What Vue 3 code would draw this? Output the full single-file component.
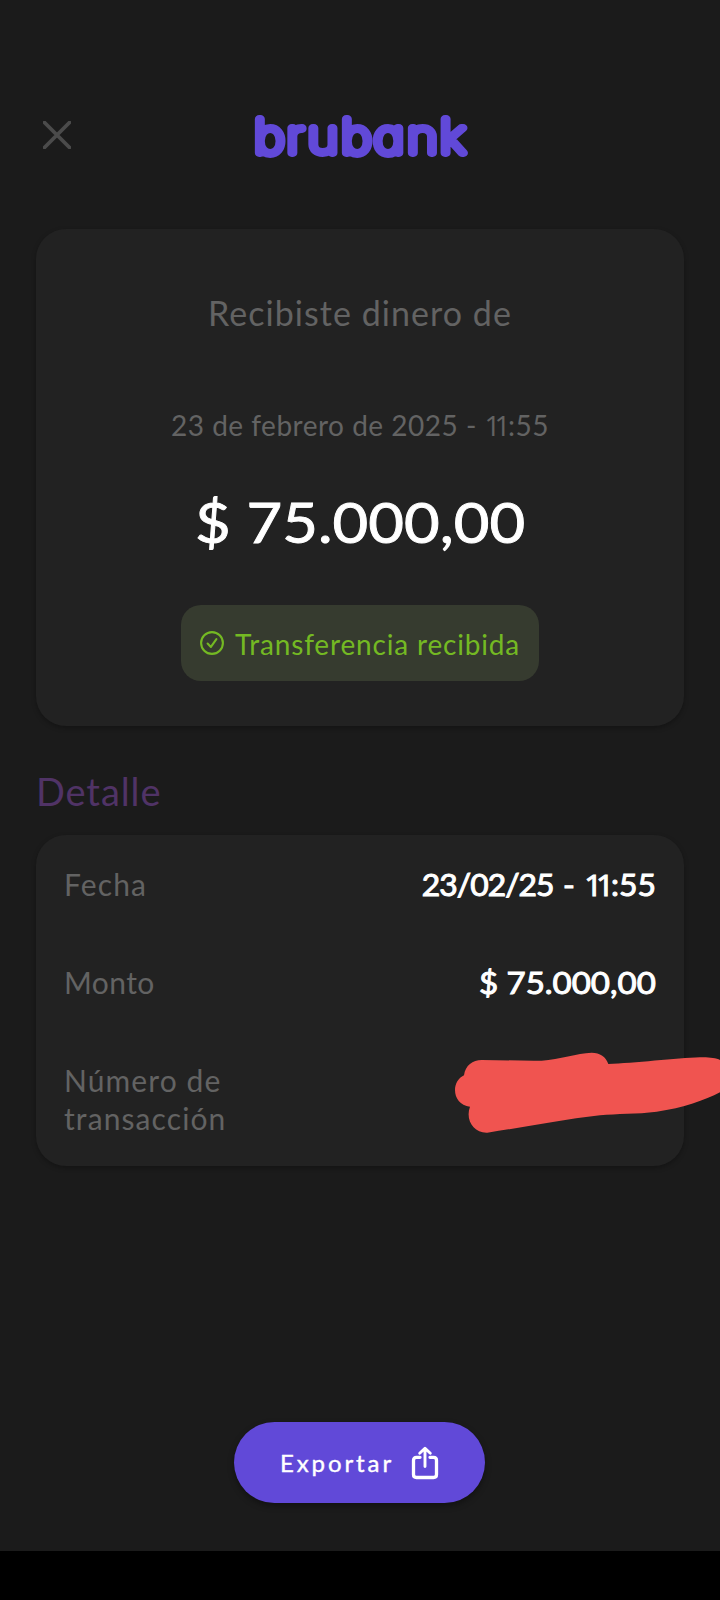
<script setup>
const rows = [
  { label: 'Fecha', kind: 'date' },
  { label: 'Monto', kind: 'money' },
  { label: 'Número de transacción', kind: 'long' },
]
</script>

<template>
  <div class="screen">
    <header class="top">
      <svg class="close" viewBox="0 0 28 28" width="28" height="28">
        <path d="M1.5 1.5L26.5 26.5M26.5 1.5L1.5 26.5" />
      </svg>
      <svg class="logo" viewBox="0 0 240 80" width="240" height="80">
        <text transform="scale(1.13 1)" x="2.9 31.6 50.2 79.8 108.6 138.2 167.2" y="55">brubank</text>
      </svg>
    </header>

    <main class="body">
      <section class="card summary">
        <p class="title">Recibiste dinero de</p>
        <p class="when">23 de febrero de 2025 - <span class="one-a">1</span><span class="one-b">1</span>:55</p>
        <p class="amount">$ 75.000,00</p>
        <div class="badge">
          <svg class="check" viewBox="0 0 24 24" width="24" height="24">
            <circle cx="12" cy="12" r="10.9" />
            <path d="M7.6 12.6L10.9 15.9L16.4 8.2" />
          </svg>
          <span class="badge-text">Transferencia recibida</span>
        </div>
      </section>

      <h2 class="heading">Detalle</h2>

      <section class="card details">
        <div v-for="row in rows" :key="row.label" class="row">
          <span class="label" :class="'label-' + row.kind">{{ row.label }}</span>
          <span v-if="row.kind === 'date'" class="value value-date"><span class="day">23/02/25</span> - <span class="one-a">1</span><span class="one-b">1</span>:55</span>
          <span v-else-if="row.kind === 'money'" class="value value-money">$ 75.000,00</span>
        </div>
      </section>
    </main>

    <footer class="actions">
      <button class="export">
        <span class="export-text">Exportar</span>
        <svg class="share" viewBox="0 0 28 34" width="28" height="34">
          <path d="M9 11.3H5.5Q2.5 11.3 2.5 14.3V28.5Q2.5 31.5 5.5 31.5H22.5Q25.5 31.5 25.5 28.5V14.3Q25.5 11.3 22.5 11.3H19" stroke-width="3.3" />
          <path d="M14 20.5V2.5M8.7 7.3L14 2.2L19.3 7.3" stroke-width="2.9" />
        </svg>
      </button>
    </footer>
    <div class="navbar"></div>

    <svg class="scribble" viewBox="0 0 960 1020" width="320" height="340">
      <path d="M192 706C196 676 218 660 245 660C310 660 370 663 425 662C480 658 530 640 575 638C600 638 618 650 625 672C700 670 830 654 900 652C925 651 948 654 960 660V757C915 780 850 805 770 815C710 823 650 820 600 826C480 840 370 862 262 878C222 880 195 840 210 800C180 796 165 775 165 750C165 732 175 714 192 706Z" />
    </svg>
  </div>
</template>

<style>
body {
  background: #1b1b1b;
}
</style>

<style scoped>
.screen {
  position: relative;
  display: flex;
  flex-direction: column;
  width: 720px;
  height: 1600px;
  overflow: hidden;
  background: #1b1b1b;
  font-family: Lato, sans-serif;
  color: #636363;
}
p,
h2 {
  margin: 0;
  font-weight: 400;
}
.top {
  display: grid;
  grid-template-columns: 208px 240px 1fr;
  height: 229px;
  padding-left: 43px;
  box-sizing: border-box;
}
.close {
  margin-top: 121px;
  fill: none;
  stroke: #4b4b4b;
  stroke-width: 3.8;
  stroke-linecap: round;
}
.logo {
  margin-top: 98px;
}
.logo text {
  font-family: Inter, sans-serif;
  font-size: 46px;
  font-weight: 100;
  font-feature-settings: 'cv11';
  fill: #6149d8;
  stroke: #6149d8;
  stroke-width: 7.8;
  stroke-linejoin: round;
}
.body {
  padding: 0 36px;
}
.card {
  box-sizing: border-box;
  border-radius: 30px;
  background: #222222;
  box-shadow: 0 2px 5px rgba(0, 0, 0, 0.28);
}
.summary {
  display: flex;
  flex-direction: column;
  align-items: center;
  height: 497px;
  padding-top: 64px;
}
.title {
  font-size: 34px;
  line-height: 40px;
  letter-spacing: 1.05px;
}
.when {
  margin-top: 75px;
  font-size: 28px;
  line-height: 34px;
  letter-spacing: 0.5px;
  white-space: nowrap;
}
.one-a,
.one-b {
  font-family: 'Open Sans', sans-serif;
  line-height: 1;
}
.when .one-a {
  letter-spacing: -6px;
}
.when .one-b {
  letter-spacing: -2.5px;
}
.amount {
  margin-top: 46px;
  font-size: 56px;
  line-height: 68px;
  color: #fff;
  transform: scaleX(1.1);
  -webkit-text-stroke: 0.9px #fff;
}
.badge {
  display: flex;
  align-items: center;
  justify-content: center;
  gap: 11px;
  width: 358px;
  height: 76px;
  margin-top: 49px;
  border-radius: 20px;
  background: #363b2f;
  color: #74b923;
}
.check {
  fill: none;
  stroke: #74b923;
  stroke-width: 2.1;
  stroke-linecap: round;
  stroke-linejoin: round;
}
.badge-text {
  padding-top: 2px;
  font-size: 28px;
  line-height: 34px;
  letter-spacing: 0.83px;
}
.heading {
  margin: 41px 0 20px;
  font-size: 38px;
  line-height: 48px;
  letter-spacing: 0.9px;
  color: #503366;
}
.details {
  display: flex;
  flex-direction: column;
  gap: 60.5px;
  height: 331px;
  padding: 31px 28px 0;
}
.row {
  display: flex;
  justify-content: space-between;
  font-size: 30px;
  line-height: 37.6px;
}
.label {
  letter-spacing: 1.1px;
}
.label-money {
  letter-spacing: 0.4px;
}
.label-long {
  width: 180px;
}
.value {
  color: #fff;
  white-space: nowrap;
  transform-origin: right center;
  -webkit-text-stroke: 1px #fff;
}
.value-money {
  transform: scaleX(1.1);
}
.value-date {
  transform: scaleX(1.06);
  word-spacing: 1.2px;
}
.day {
  letter-spacing: -0.9px;
}
.value .one-a {
  letter-spacing: -6px;
}
.value .one-b {
  letter-spacing: -3px;
}
.actions {
  display: flex;
  justify-content: center;
  margin-top: auto;
  padding: 0 1px 48px 0;
}
.export {
  display: flex;
  align-items: center;
  justify-content: center;
  gap: 17px;
  width: 251px;
  height: 81px;
  border: 0;
  border-radius: 41px;
  background: #6149d8;
  box-shadow: 0 3px 6px rgba(0, 0, 0, 0.35);
  color: #fff;
  font-family: Lato, sans-serif;
}
.export-text {
  padding-top: 1px;
  font-size: 24px;
  line-height: 30px;
  letter-spacing: 2.9px;
  -webkit-text-stroke: 0.4px #fff;
}
.share {
  fill: none;
  stroke: #fff;
  stroke-linecap: round;
  stroke-linejoin: round;
}
.navbar {
  height: 49px;
  background: #000;
}
.scribble {
  position: absolute;
  left: 400px;
  top: 840px;
  fill: #f05450;
}
</style>
